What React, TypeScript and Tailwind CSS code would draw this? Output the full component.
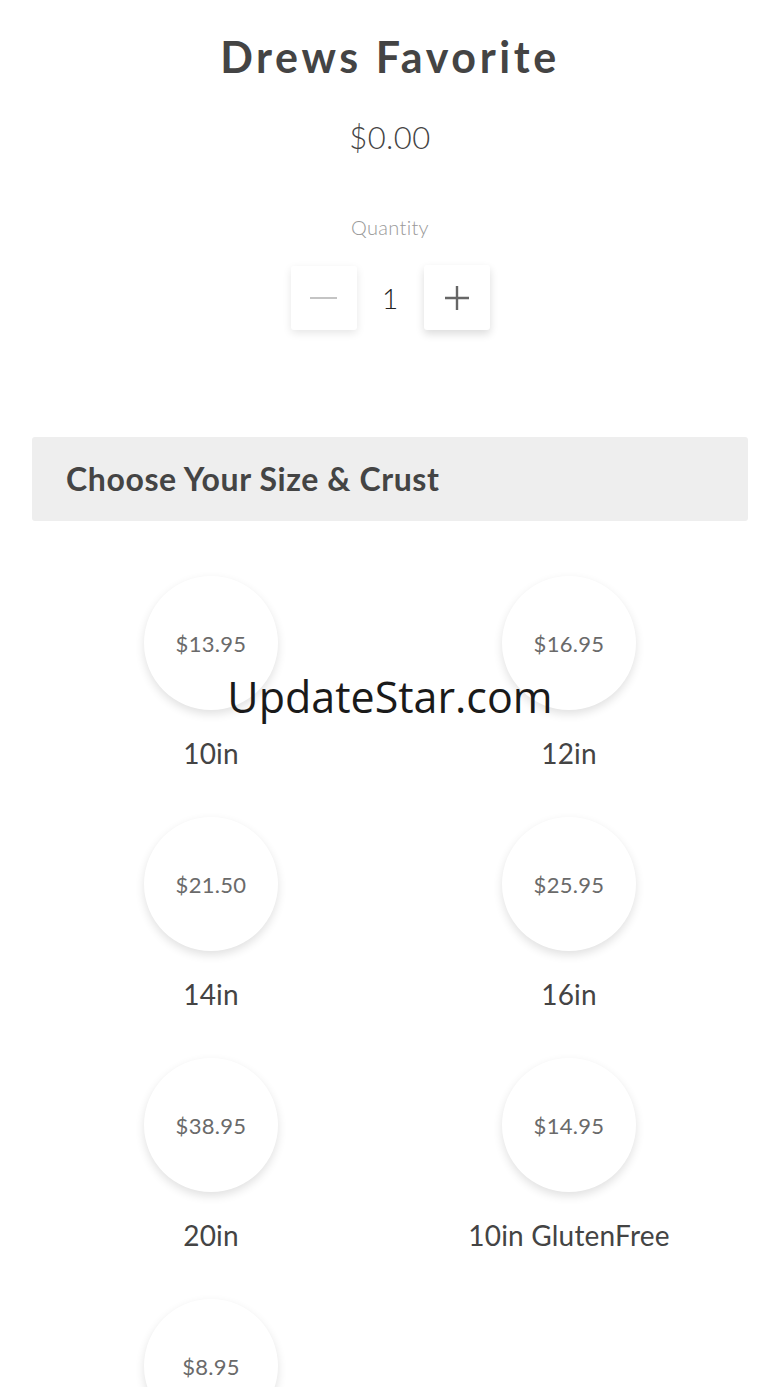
import React from "react";

const sizes = [
  { price: "$13.95", label: "10in" },
  { price: "$16.95", label: "12in" },
  { price: "$21.50", label: "14in" },
  { price: "$25.95", label: "16in" },
  { price: "$38.95", label: "20in" },
  { price: "$14.95", label: "10in GlutenFree" },
  { price: "$8.95", label: "" },
];

export default function App() {
  return (
    <div
      className="relative w-[780px] h-[1387px] overflow-hidden bg-white text-[#444]"
      style={{ fontFamily: "Lato, 'Open Sans', sans-serif" }}
    >
      <div className="flex flex-col items-center pt-[32px]">
        <h1 className="text-[43px] leading-[50px] font-bold text-[#444] tracking-[3.6px]">Drews Favorite</h1>
        <div className="mt-[37px] text-[31px] leading-[36px] font-light text-[#444] tracking-[0.5px]">$0.00</div>
        <div className="mt-[60px] text-[20px] leading-[24px] font-light text-[#999] tracking-[0.3px]">Quantity</div>
        <div className="mt-[26px] flex items-center">
          <button className="w-[66px] h-[64px] bg-white rounded-[3px] shadow-[0_3px_8px_rgba(0,0,0,0.10)] flex items-center justify-center">
            <span className="block w-[27px] h-[2px] bg-[#c4c4c4]" />
          </button>
          <div className="w-[67px] text-center text-[28px] font-light text-[#222]">1</div>
          <button className="w-[66px] h-[65px] bg-white rounded-[3px] shadow-[0_4px_8px_rgba(0,0,0,0.14)] flex items-center justify-center">
            <svg width="28" height="28" viewBox="0 0 28 28">
              <path d="M14 2v24M2 14h24" stroke="#666" strokeWidth="2.4" />
            </svg>
          </button>
        </div>
      </div>

      <div className="mx-[32px] mt-[107px] h-[84px] bg-[#eeeeee] rounded-[3px] flex items-center pl-[34px]">
        <h2 className="text-[32px] font-bold text-[#444] tracking-[0.6px]">Choose Your Size &amp; Crust</h2>
      </div>

      <div className="mx-[32px] mt-[55px] grid grid-cols-2 gap-y-[47px]">
        {sizes.map((s, i) => (
          <div key={i} className="flex flex-col items-center">
            <div className="w-[134px] h-[134px] rounded-full bg-white shadow-[0_4px_10px_rgba(0,0,0,0.12)] flex items-center justify-center">
              <span className="text-[22px] font-normal text-[#6a6a6a] tracking-[0.3px]">{s.price}</span>
            </div>
            <div className="mt-[26px] h-[34px] text-[28px] leading-[34px] font-normal text-[#444] tracking-[0.2px]">{s.label}</div>
          </div>
        ))}
      </div>

      <div
        className="absolute left-0 right-0 top-[670px] text-center text-[43px] leading-[54px] text-[#1a1a1a]"
        style={{ fontFamily: "'Open Sans', 'Noto Sans', sans-serif" }}
      >
        UpdateStar.com
      </div>
    </div>
  );
}
